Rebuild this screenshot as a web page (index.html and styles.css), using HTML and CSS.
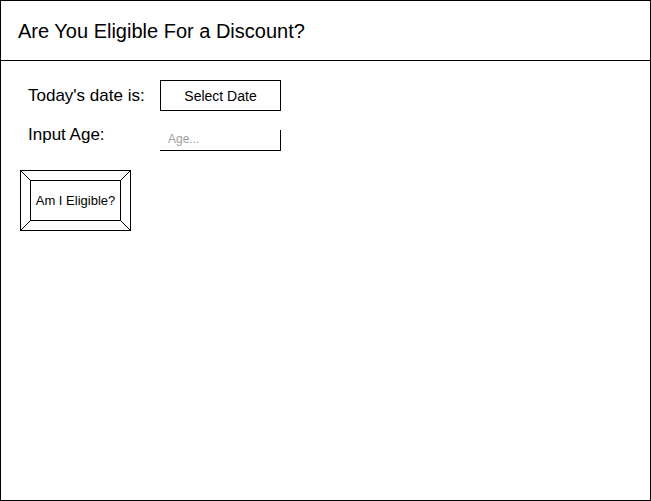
FILE: index.html
```html
<!DOCTYPE html>
<html lang="en">
<head>
<meta charset="utf-8">
<title>Are You Eligible For a Discount?</title>
<link rel="stylesheet" href="styles.css">
</head>
<body>
<div class="frame">
  <header class="header">
    <h1 class="title">Are You Eligible For a Discount?</h1>
  </header>
  <main class="main">
    <div class="form">
      <div class="row row-date">
        <span class="label">Today's date is:</span>
        <button class="select-date" type="button">Select Date</button>
      </div>
      <div class="row row-age">
        <span class="label">Input Age:</span>
        <input class="age" type="text" placeholder="Age...">
      </div>
    </div>
    <button class="eligible" type="button">
      <svg class="bevel" width="111" height="61" viewBox="0 0 111 61" aria-hidden="true">
        <line x1="0.5" y1="0.5" x2="10.5" y2="10.5"/>
        <line x1="110.5" y1="0.5" x2="100.5" y2="10.5"/>
        <line x1="0.5" y1="60.5" x2="10.5" y2="50.5"/>
        <line x1="110.5" y1="60.5" x2="100.5" y2="50.5"/>
      </svg>
      <span class="face">Am I Eligible?</span>
    </button>
  </main>
</div>
</body>
</html>
```

FILE: styles.css
```css
* {
  box-sizing: border-box;
}

html, body {
  margin: 0;
  padding: 0;
  background: #fff;
}

body {
  font-family: "Liberation Sans", Arial, sans-serif;
  color: #000;
}

.frame {
  width: 651px;
  height: 501px;
  border: 1px solid #000;
  display: flex;
  flex-direction: column;
}

.header {
  height: 60px;
  border-bottom: 1px solid #000;
  display: flex;
  align-items: center;
  padding: 2px 0 0 17px;
}

.title {
  margin: 0;
  font-size: 20px;
  font-weight: normal;
  line-height: 23px;
}

.main {
  padding: 19px 0 0 19px;
  display: flex;
  flex-direction: column;
  align-items: flex-start;
}

.form {
  display: flex;
  flex-direction: column;
}

.row {
  display: grid;
  grid-template-columns: 140px 121px;
}

.row-date {
  align-items: center;
}

.row-age {
  margin-top: 14px;
  align-items: start;
}

.label {
  padding-left: 8px;
  font-size: 17px;
  line-height: 19px;
}

.select-date {
  width: 121px;
  height: 31px;
  border: 1px solid #000;
  background: #fff;
  font-family: "Liberation Sans", Arial, sans-serif;
  font-size: 14px;
  color: #000;
  padding: 0;
  margin: 0;
}

.age {
  margin: 5px 0 0 0;
  width: 121px;
  height: 21px;
  border: none;
  border-right: 1px solid #000;
  border-bottom: 1px solid #000;
  border-radius: 0;
  background: transparent;
  padding: 0 0 2px 8px;
  font-family: "Liberation Sans", Arial, sans-serif;
  font-size: 12px;
  outline: none;
}

.age::placeholder {
  color: #a0a0a0;
  opacity: 1;
}

.eligible {
  position: relative;
  margin-top: 19px;
  width: 111px;
  height: 61px;
  border: 1px solid #000;
  background: #fff;
  padding: 9px;
  display: flex;
  font-family: "Liberation Sans", Arial, sans-serif;
}

.bevel {
  position: absolute;
  left: -1px;
  top: -1px;
  stroke: #000;
  stroke-width: 1;
}

.face {
  flex: 1;
  border: 1px solid #000;
  display: flex;
  align-items: center;
  justify-content: center;
  font-size: 13px;
  color: #000;
}
```
